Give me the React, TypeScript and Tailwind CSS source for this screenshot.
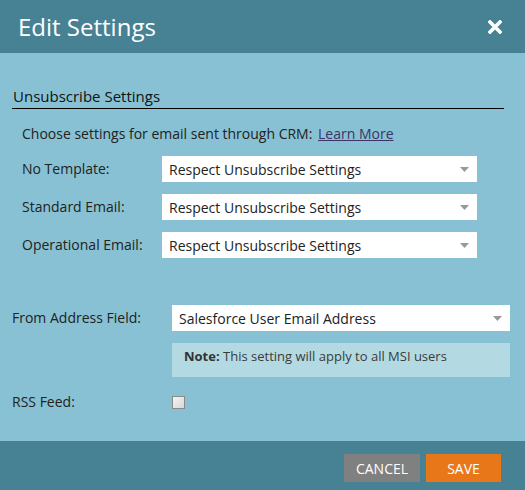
const font = { fontFamily: '"Open Sans", "Liberation Sans", sans-serif' }

interface rowProps {
  label: string
  value: string
}

const unsubscribeRows: rowProps[] = [
  { label: "No Template:", value: "Respect Unsubscribe Settings" },
  { label: "Standard Email:", value: "Respect Unsubscribe Settings" },
  { label: "Operational Email:", value: "Respect Unsubscribe Settings" },
]

const Select = ({ value, width }: { value: string; width: string }) => {
  return (
    <div
      className={`${width} h-[26px] bg-white flex items-center justify-between pl-[7px] pr-[8px] text-[14px] text-[#222]`}
    >
      <span>{value}</span>
      <svg width="9" height="5" viewBox="0 0 9 5">
        <path d="M0 0 H9 L4.5 5 Z" fill="#999" />
      </svg>
    </div>
  )
}

export default function App() {
  return (
    <div className="w-[525px] h-[490px] bg-[#88c1d3] flex flex-col" style={font}>
      <div className="h-[53px] bg-[#468294] flex items-center justify-between pl-[18px] pr-[23px]">
        <h1 className="text-[24px] text-white leading-none">Edit Settings</h1>
        <svg width="14" height="14" viewBox="0 0 14 14">
          <path d="M2 2 L12 12 M12 2 L2 12" stroke="#fff" strokeWidth="3.6" strokeLinecap="square" />
        </svg>
      </div>

      <div className="flex-1 flex flex-col">
        <h2 className="mt-[33px] ml-[12px] mr-[21px] pl-[1px] pb-[2px] border-b border-black text-[15px] leading-[20px] text-[#111]">
          Unsubscribe Settings
        </h2>

        <div className="mt-[15px] pl-[22px] flex flex-col gap-[12px] text-[14px] text-[#222]">
          <p className="leading-[20px]">
            Choose settings for email sent through CRM:{" "}
            <a className="ml-[2px] underline text-[#3b3468]">Learn More</a>
          </p>
          {unsubscribeRows.map((row) => (
            <div key={row.label} className="flex items-center">
              <span className="w-[140px] leading-[20px]">{row.label}</span>
              <Select value={row.value} width="w-[315px]" />
            </div>
          ))}
        </div>

        <div className="mt-[47px] pl-[12px] flex flex-col text-[14px] text-[#222]">
          <div className="flex items-center">
            <span className="w-[160px] leading-[20px]">From Address Field:</span>
            <Select value="Salesforce User Email Address" width="w-[338px]" />
          </div>
          <div className="ml-[160px] mt-[12px] w-[338px] h-[34px] bg-[#b3dae3] px-[12px] pt-[3px] leading-[20px] text-[13px] text-[#3a3a3a]">
            <b className="text-[#333]">Note:</b> This setting will apply to all MSI users
          </div>
          <div className="mt-[15px] flex items-center">
            <span className="w-[160px] leading-[20px]">RSS Feed:</span>
            <span className="w-[13px] h-[13px] border border-[#8a8a8a] bg-gradient-to-br from-[#f4f4f4] to-[#d8d8d8]" />
          </div>
        </div>
      </div>

      <div className="h-[49px] bg-[#468294] flex justify-end items-start pt-[13px] pr-[24px] gap-[6px]">
        <button className="w-[76px] h-[28px] bg-[#808080] text-white text-[14px]">CANCEL</button>
        <button className="w-[75px] h-[28px] bg-[#e8771a] text-white text-[14px]">SAVE</button>
      </div>
    </div>
  )
}
